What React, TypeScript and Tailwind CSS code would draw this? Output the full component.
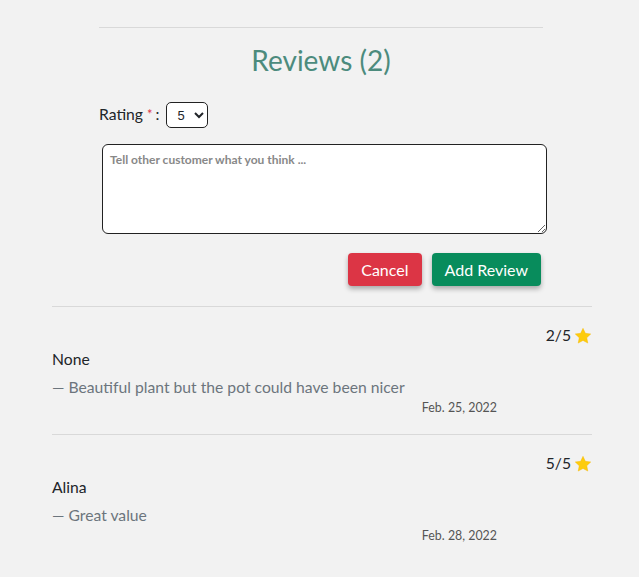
const reviews = [
  { rating: 2, name: "None", text: "Beautiful plant but the pot could have been nicer", date: "Feb. 25, 2022" },
  { rating: 5, name: "Alina", text: "Great value", date: "Feb. 28, 2022" },
];

function Star() {
  return (
    <svg width="18" height="18" viewBox="0 0 24 24" className="inline-block ml-[3px] -mt-[3px]">
      <path
        d="M12 1.8l3.1 6.6 7.2.9-5.3 5 1.4 7.1L12 17.9l-6.4 3.5 1.4-7.1-5.3-5 7.2-.9z"
        fill="#fdcc0d"
        stroke="#f5b800"
        strokeWidth="0.6"
        strokeLinejoin="round"
      />
    </svg>
  );
}

export default function App() {
  return (
    <div className="w-[639px] h-[577px] bg-[#f2f2f2] font-['Lato',sans-serif] text-[#212529] overflow-hidden">
      <div className="pt-[27px] mx-[99px] w-[444px]">
        <div className="border-t border-[#d9d9d9]" />
        <h2 className="text-center text-[28px] leading-[34px] text-[#4c8b7d] mt-[15px]">Reviews (2)</h2>
      </div>

      <div className="ml-[99px] mt-[25px] flex items-center h-[26px] text-[15.7px]">
        <span>Rating</span>
        <span className="text-[#dc3545] ml-[4px] text-[13px]">*</span>
        <span className="ml-[3px] mr-[7px]">:</span>
        <select className="h-[26px] w-[42px] border border-[#222] rounded-[5px] bg-white text-[13px] pl-[6px] font-['Liberation_Sans',sans-serif]" defaultValue="5">
          <option>1</option>
          <option>2</option>
          <option>3</option>
          <option>4</option>
          <option>5</option>
        </select>
      </div>

      <div className="ml-[102px] mt-[16px] w-[445px]">
        <textarea
          className="block w-[445px] h-[90px] border border-[#222] rounded-[6px] bg-white px-[7px] pt-[6px] pb-[8px] text-[12px] font-bold placeholder:text-[#888] resize-y"
          placeholder="Tell other customer what you think ..."
        />
      </div>

      <div className="flex justify-end gap-[10px] w-[541px] mt-[19px]">
        <button className="h-[33px] px-[13px] rounded-[4px] bg-[#dc3545] text-white text-[16px] shadow-[0_3px_5px_rgba(0,0,0,0.3)]">Cancel</button>
        <button className="h-[33px] px-[13px] rounded-[4px] bg-[#088c5c] text-white text-[16px] shadow-[0_3px_5px_rgba(0,0,0,0.3)]">Add Review</button>
      </div>

      <div className="mx-[52px] w-[540px] mt-[20px]">
        {reviews.map((r, i) => (
          <div key={i} className="border-t border-[#d9d9d9] pt-[17px] pb-[18px]">
            <div className="text-right text-[15.7px] leading-[22px]">
              {r.rating}/5
              <Star />
            </div>
            <div className="text-[15.7px] leading-[22px] mt-[2px]">{r.name}</div>
            <div className="text-[15.7px] leading-[22px] mt-[6px] text-[#6c757d]">— {r.text}</div>
            <div className="w-[445px] text-right text-[12.4px] leading-[16px] text-[#555] mt-[2px]">{r.date}</div>
          </div>
        ))}
      </div>
    </div>
  );
}
